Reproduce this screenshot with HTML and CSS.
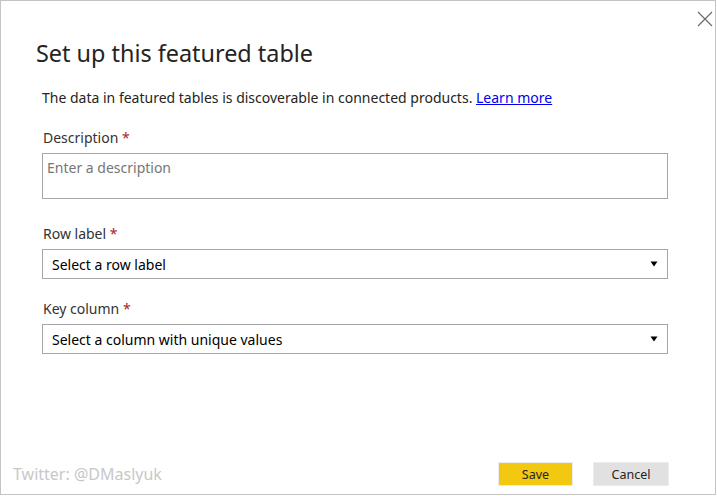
FILE: index.html
```html
<!doctype html>
<html lang="en">
<head>
  <meta charset="utf-8">
  <title>Set up this featured table</title>
  <link rel="stylesheet" href="styles.css">
</head>
<body>
  <div class="dialog">
    <button class="close" aria-label="Close">
      <svg width="16" height="16" viewBox="0 0 16 16">
        <path d="M1 1 L15 15 M15 1 L1 15" stroke="#6b6b6b" stroke-width="1.2" fill="none"/>
      </svg>
    </button>

    <h1 class="title">Set up this featured table</h1>

    <div class="content">
      <p class="intro">The data in featured tables is discoverable in connected products. <a href="#">Learn more</a></p>

      <div class="field field-desc">
        <label>Description <span class="req">*</span></label>
        <textarea placeholder="Enter a description"></textarea>
      </div>

      <div class="field">
        <label>Row label <span class="req">*</span></label>
        <div class="select">
          <span>Select a row label</span>
          <svg width="8" height="6" viewBox="0 0 8 6"><path d="M0.5 0.5 H7.5 L4 5.5 Z" fill="#000"/></svg>
        </div>
      </div>

      <div class="field">
        <label>Key column <span class="req">*</span></label>
        <div class="select">
          <span>Select a column with unique values</span>
          <svg width="8" height="6" viewBox="0 0 8 6"><path d="M0.5 0.5 H7.5 L4 5.5 Z" fill="#000"/></svg>
        </div>
      </div>
    </div>

    <div class="footer">
      <span class="watermark">Twitter: @DMaslyuk</span>
      <div class="actions">
        <button class="btn btn-save">Save</button>
        <button class="btn btn-cancel">Cancel</button>
      </div>
    </div>
  </div>
</body>
</html>
```

FILE: styles.css
```css
body {
  margin: 0;
  background-color: #fff;
  font-family: "Noto Sans", "Open Sans", sans-serif;
  color: #252423;
}
.dialog {
  position: relative;
  width: 716px;
  height: 495px;
  box-sizing: border-box;
  border: 1px solid #c4c4c4;
  display: flex;
  flex-direction: column;
  background-color: #fff;
}
.close {
  position: absolute;
  top: 10px;
  right: 2px;
  width: 16px;
  height: 16px;
  padding: 0;
  border: none;
  background: none;
  cursor: pointer;
}
.close svg {
  display: block;
}
.title {
  margin: 36px 0 0 0;
  padding-left: 35px;
  font-size: 23.4px;
  font-weight: normal;
  line-height: 32px;
  color: #252423;
}
.content {
  flex: 1;
  padding: 0 47px 0 41px;
}
.intro {
  margin: 19px 0 0 0;
  font-size: 14px;
  line-height: 20px;
}
.intro a {
  color: #0000ee;
}
.field {
  margin-top: 20px;
}
.field-desc {
  padding-bottom: 5px;
}
.field label {
  display: block;
  margin-left: 1px;
  font-size: 14px;
  line-height: 20px;
  color: #333;
}
.req {
  color: #a4262c;
}
.field textarea {
  display: block;
  width: 626px;
  height: 46px;
  margin-top: 5px;
  box-sizing: border-box;
  border: 1px solid #a6a6a6;
  padding: 4px 4px;
  resize: none;
  font-family: inherit;
  font-size: 14px;
  line-height: 20px;
}
.field textarea::placeholder {
  color: #767676;
}
.select {
  display: flex;
  align-items: center;
  justify-content: space-between;
  width: 626px;
  height: 30px;
  margin-top: 5px;
  box-sizing: border-box;
  border: 1px solid #a6a6a6;
  padding: 0 9px 0 9px;
  font-size: 14px;
  color: #000;
}
.footer {
  display: flex;
  align-items: center;
  justify-content: space-between;
  padding: 0 46px 8px 12px;
}
.watermark {
  font-size: 16px;
  line-height: 20px;
  color: #c8c8c8;
}
.actions {
  display: flex;
  gap: 20px;
}
.btn {
  height: 24px;
  padding: 0;
  border: 1px solid #ececec;
  font-family: inherit;
  font-size: 12.5px;
  color: #252423;
  cursor: pointer;
}
.btn-save {
  width: 75px;
  background-color: #f2c811;
}
.btn-cancel {
  width: 76px;
  background-color: #e1e1e1;
}
```
